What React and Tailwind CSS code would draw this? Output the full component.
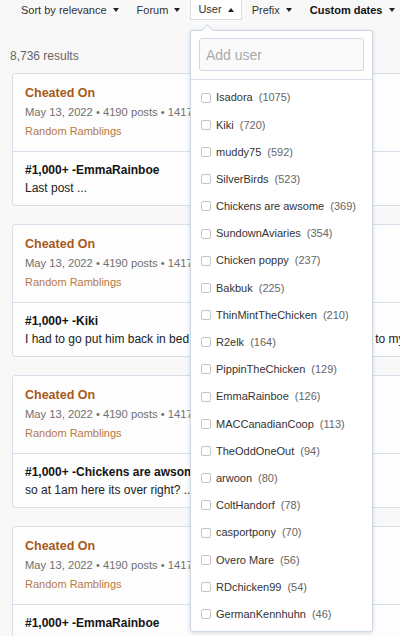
import React from 'react';

const users = [
  ['Isadora', 1075],
  ['Kiki', 720],
  ['muddy75', 592],
  ['SilverBirds', 523],
  ['Chickens are awsome', 369],
  ['SundownAviaries', 354],
  ['Chicken poppy', 237],
  ['Bakbuk', 225],
  ['ThinMintTheChicken', 210],
  ['R2elk', 164],
  ['PippinTheChicken', 129],
  ['EmmaRainboe', 126],
  ['MACCanadianCoop', 113],
  ['TheOddOneOut', 94],
  ['arwoon', 80],
  ['ColtHandorf', 78],
  ['casportpony', 70],
  ['Overo Mare', 56],
  ['RDchicken99', 54],
  ['GermanKennhuhn', 46],
];

const results = [
  { user: 'EmmaRainboe', text: 'Last post ...' },
  { user: 'Kiki', text: 'I had to go put him back in bed because he kept trying to go back to my room' },
  { user: 'Chickens are awsome', text: 'so at 1am here its over right? ...' },
  { user: 'EmmaRainboe', text: 'Last post ...' },
];

const Caret = ({ up }) => (
  <svg width="6" height="4" viewBox="0 0 6 4" className="ml-[6px] shrink-0">
    <path d={up ? 'M0 4 L3 0 L6 4 Z' : 'M0 0 L6 0 L3 4 Z'} fill="#222" />
  </svg>
);

const FilterItem = ({ label, bold, active, up }) => (
  <div
    className={`flex items-center h-[20px] px-[7px] ${
      active ? 'bg-white border border-t-0 border-[#dcdcdc]' : 'border border-transparent'
    } ${bold ? 'font-bold text-[#111]' : 'text-[#333]'}`}
  >
    <span>{label}</span>
    <Caret up={up} />
  </div>
);

const ResultCard = ({ user, text }) => (
  <div className="w-[560px] ml-[12px] mb-[18px] bg-[#fdfdfd] border border-[#d5dfe9] rounded-[3px]">
    <div className="px-[12px] pt-[10px] pb-[11px] border-b border-[#d5dfe9]">
      <div className="text-[12.5px] leading-[18px] font-bold text-[#a8591c]">Cheated On</div>
      <div className="text-[11.2px] leading-[20px] text-[#707070] whitespace-nowrap">
        May 13, 2022 • 4190 posts • 14170 replies
      </div>
      <div className="text-[11px] leading-[18px] text-[#b57a45]">Random Ramblings</div>
    </div>
    <div className="px-[12px] pt-[9px] pb-[8px]">
      <div className="text-[12px] leading-[18px] font-bold text-[#141414] whitespace-nowrap">
        #1,000+ -{user}
      </div>
      <div className="text-[12px] leading-[18px] text-[#222] whitespace-nowrap">{text}</div>
    </div>
  </div>
);

export default function App() {
  return (
    <div
      className="relative w-[400px] h-[636px] overflow-hidden bg-[#f8f8f8]"
      style={{ fontFamily: '"Liberation Sans", Arial, sans-serif' }}
    >
      <div className="flex items-start pl-[13px] gap-[2px] text-[11px] whitespace-nowrap">
        <FilterItem label="Sort by relevance" />
        <FilterItem label="Forum" />
        <FilterItem label="User" active up />
        <FilterItem label="Prefix" />
        <FilterItem label="Custom dates" bold />
      </div>

      <div className="pt-[26px] pb-[7px] pl-[10px] text-[12px] leading-[20px] text-[#666]">8,736 results</div>

      <div>
        {results.map((r, i) => (
          <ResultCard key={i} {...r} />
        ))}
      </div>

      <div className="absolute left-[190px] top-[30px] w-[183px] h-[602px] bg-white border border-[#cbd8e4] rounded-[3px] shadow-[0_1px_4px_rgba(0,0,0,0.15)]">
        <div className="absolute -top-[5px] left-[12px] w-[9px] h-[9px] rotate-45 bg-white border-l border-t border-[#cbd8e4]" />
        <div className="relative px-[8px] pt-[7px] pb-[8px] border-b border-[#d5dfe9]">
          <input
            type="text"
            placeholder="Add user"
            className="w-full h-[33px] px-[6px] text-[14px] bg-[#fafafa] border border-[#cbd8e4] rounded-[3px] outline-none placeholder:text-[#aaa]"
          />
        </div>
        <div className="pt-[4px]">
          {users.map(([name, count]) => (
            <label key={name} className="flex items-center h-[27.2px] pl-[10px] text-[11px] text-[#333] whitespace-nowrap">
              <span className="w-[10px] h-[10px] mr-[5px] border border-[#c4c4c4] rounded-[2px] bg-white shrink-0" />
              <span>{name}</span>
              <span className="ml-[6px] text-[#666]">({count})</span>
            </label>
          ))}
        </div>
      </div>
    </div>
  );
}
